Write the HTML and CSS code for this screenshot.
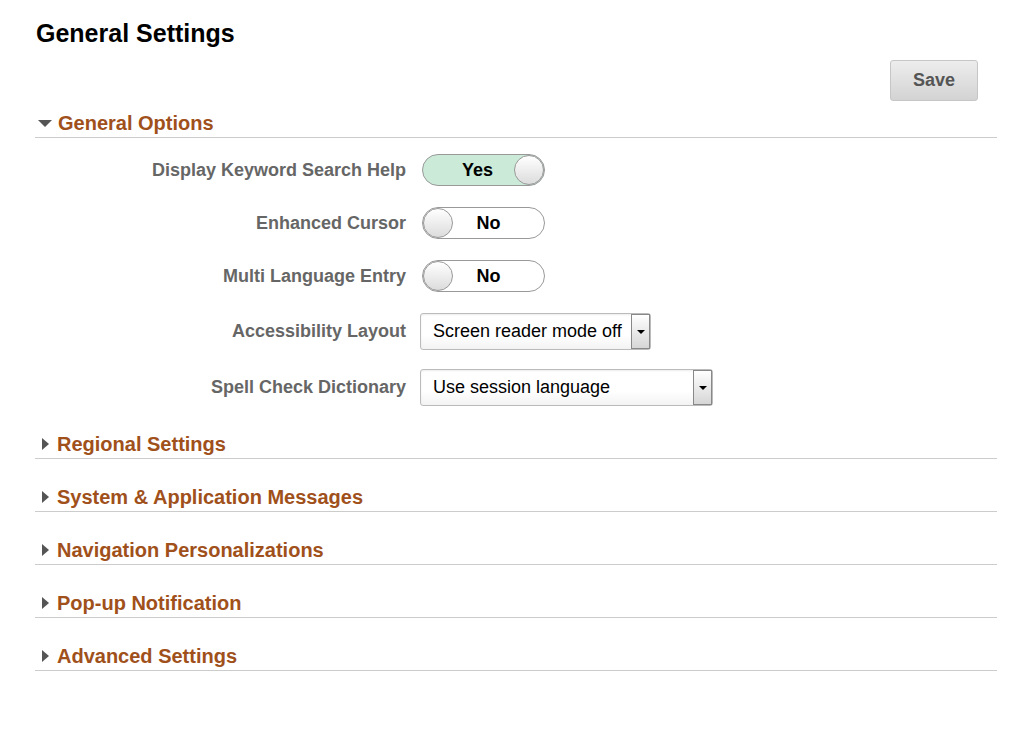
FILE: index.html
```html
<!DOCTYPE html>
<html lang="en">
<head>
    <meta charset="UTF-8">
    <title>General Settings</title>
    <link rel="stylesheet" href="styles.css">
</head>
<body>
    <div class="page">
        <h1 class="page-title">General Settings</h1>

        <div class="toolbar">
            <button class="save-btn">Save</button>
        </div>

        <div class="section open">
            <div class="section-header">
                <span class="arrow-down"></span>
                <span class="section-title">General Options</span>
            </div>
            <div class="section-body">
                <div class="form-row">
                    <div class="form-label">Display Keyword Search Help</div>
                    <div class="toggle on">
                        <span class="toggle-text">Yes</span>
                        <span class="toggle-knob"></span>
                    </div>
                </div>
                <div class="form-row">
                    <div class="form-label">Enhanced Cursor</div>
                    <div class="toggle">
                        <span class="toggle-knob"></span>
                        <span class="toggle-text">No</span>
                    </div>
                </div>
                <div class="form-row">
                    <div class="form-label">Multi Language Entry</div>
                    <div class="toggle">
                        <span class="toggle-knob"></span>
                        <span class="toggle-text">No</span>
                    </div>
                </div>
                <div class="form-row select-row">
                    <div class="form-label">Accessibility Layout</div>
                    <div class="select select-short">
                        <span class="select-text">Screen reader mode off</span>
                        <span class="select-btn"><span class="select-caret"></span></span>
                    </div>
                </div>
                <div class="form-row select-row">
                    <div class="form-label">Spell Check Dictionary</div>
                    <div class="select select-long">
                        <span class="select-text">Use session language</span>
                        <span class="select-btn"><span class="select-caret"></span></span>
                    </div>
                </div>
            </div>
        </div>

        <div class="section">
            <div class="section-header">
                <span class="arrow-right"></span>
                <span class="section-title">Regional Settings</span>
            </div>
        </div>
        <div class="section">
            <div class="section-header">
                <span class="arrow-right"></span>
                <span class="section-title">System &amp; Application Messages</span>
            </div>
        </div>
        <div class="section">
            <div class="section-header">
                <span class="arrow-right"></span>
                <span class="section-title">Navigation Personalizations</span>
            </div>
        </div>
        <div class="section">
            <div class="section-header">
                <span class="arrow-right"></span>
                <span class="section-title">Pop-up Notification</span>
            </div>
        </div>
        <div class="section">
            <div class="section-header">
                <span class="arrow-right"></span>
                <span class="section-title">Advanced Settings</span>
            </div>
        </div>
    </div>
</body>
</html>
```

FILE: styles.css
```css
body {
    margin: 0;
    font-family: "Liberation Sans", Arial, sans-serif;
    background-color: #FFFFFF;
    color: #000000;
}

.page {
    padding: 19px 19px 0 35px;
}

.page-title {
    margin: 0 0 0 1px;
    font-size: 25px;
    line-height: 28px;
    font-weight: bold;
    color: #000000;
}

.toolbar {
    display: flex;
    justify-content: flex-end;
    margin-top: 13px;
    padding-right: 19px;
}

.save-btn {
    width: 88px;
    height: 41px;
    border: 1px solid #C6C6C6;
    border-radius: 3px;
    background: linear-gradient(#EDEDED, #D3D3D3);
    color: #555555;
    font-family: "Liberation Sans", Arial, sans-serif;
    font-size: 18px;
    font-weight: bold;
    cursor: pointer;
}

.section {
    margin-top: 24px;
}

.section.open {
    margin-top: 8px;
}

.section-header {
    display: flex;
    align-items: center;
    height: 28px;
    border-bottom: 1px solid #CCCCCC;
}

.section-title {
    font-size: 20px;
    font-weight: bold;
    color: #A0501A;
}

.arrow-down {
    width: 0;
    height: 0;
    margin: 0 6px 0 3px;
    border-left: 7px solid transparent;
    border-right: 7px solid transparent;
    border-top: 7px solid #555555;
}

.arrow-right {
    width: 0;
    height: 0;
    margin: 0 8px 0 7px;
    border-top: 6px solid transparent;
    border-bottom: 6px solid transparent;
    border-left: 7px solid #555555;
}

.section-body {
    padding-top: 16px;
}

.form-row {
    display: flex;
    align-items: center;
    gap: 16px;
    margin-bottom: 21px;
}

.form-row.select-row {
    margin-bottom: 19px;
}

.form-row:last-child {
    margin-bottom: 0;
}

.form-label {
    width: 371px;
    text-align: right;
    font-size: 18px;
    font-weight: bold;
    color: #666666;
}

.toggle {
    display: flex;
    align-items: center;
    box-sizing: border-box;
    width: 123px;
    height: 32px;
    border: 1px solid #999999;
    border-radius: 16px;
    background-color: #FFFFFF;
}

.toggle.on {
    background-color: #CBEBD8;
}

.toggle-text {
    flex: 1;
    padding-right: 20px;
    text-align: center;
    font-size: 18px;
    font-weight: bold;
    color: #000000;
}

.toggle.on .toggle-text {
    padding-right: 0;
    padding-left: 18px;
}

.toggle-knob {
    box-sizing: border-box;
    width: 30px;
    height: 30px;
    border: 1px solid #999999;
    border-radius: 50%;
    background: linear-gradient(#FFFFFF, #DCDCDC);
}

.select {
    display: flex;
    align-items: center;
    box-sizing: border-box;
    height: 37px;
    margin-left: -2px;
    border: 1px solid #BBBBBB;
    border-radius: 3px;
    background: linear-gradient(#FFFFFF 60%, #F3F3F3);
    box-shadow: inset 0 1px 2px rgba(0, 0, 0, 0.08);
}

.select-short {
    width: 231px;
}

.select-long {
    width: 293px;
}

.select-text {
    flex: 1;
    padding-left: 12px;
    font-size: 18px;
    color: #000000;
    white-space: nowrap;
}

.select-btn {
    display: flex;
    align-items: center;
    justify-content: center;
    box-sizing: border-box;
    width: 19px;
    height: 35px;
    border: 1px solid #888888;
    background: linear-gradient(#FFFFFF, #D6D6D6);
}

.select-caret {
    width: 0;
    height: 0;
    border-left: 4px solid transparent;
    border-right: 4px solid transparent;
    border-top: 4px solid #000000;
}
```
